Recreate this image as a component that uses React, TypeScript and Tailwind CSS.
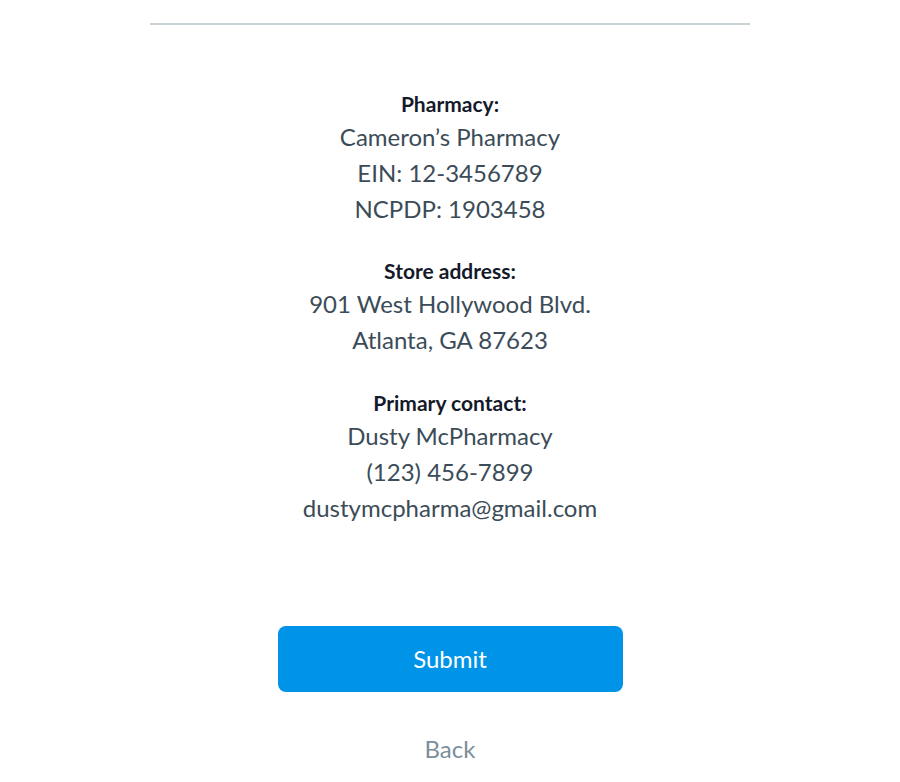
export default function App() {
  const font = { fontFamily: "Lato, 'Noto Sans', sans-serif" };
  return (
    <div className="w-[900px] h-[782px] bg-white overflow-hidden" style={font}>
      <div className="pt-[23px] flex flex-col items-center">
        <div className="w-[600px] h-[2px] bg-[#c9d3d8]" />
        <div className="mt-[64px] flex flex-col items-center text-center">
          <div className="flex flex-col items-center">
            <div className="text-[21px] leading-[30px] font-bold text-[#151a2a]">Pharmacy:</div>
            <div className="text-[24px] leading-[36px] text-[#3b4c58]">Cameron’s Pharmacy</div>
            <div className="text-[24px] leading-[36px] text-[#3b4c58]">EIN: 12-3456789</div>
            <div className="text-[24px] leading-[36px] text-[#3b4c58]">NCPDP: 1903458</div>
          </div>
          <div className="mt-[29px] flex flex-col items-center">
            <div className="text-[21px] leading-[30px] font-bold text-[#151a2a]">Store address:</div>
            <div className="text-[24px] leading-[36px] text-[#3b4c58]">901 West Hollywood Blvd.</div>
            <div className="text-[24px] leading-[36px] text-[#3b4c58]">Atlanta, GA 87623</div>
          </div>
          <div className="mt-[30px] flex flex-col items-center">
            <div className="text-[21px] leading-[30px] font-bold text-[#151a2a]">Primary contact:</div>
            <div className="text-[24px] leading-[36px] text-[#3b4c58]">Dusty McPharmacy</div>
            <div className="text-[24px] leading-[36px] text-[#3b4c58]">(123) 456-7899</div>
            <div className="text-[24px] leading-[36px] text-[#3b4c58]">dustymcpharma@gmail.com</div>
          </div>
        </div>
        <button className="mt-[100px] w-[345px] h-[66px] rounded-[8px] bg-[#0094e8] text-white text-[24px]">
          Submit
        </button>
        <button className="mt-[39px] text-[24px] leading-[36px] text-[#7b8e9b]">Back</button>
      </div>
    </div>
  );
}
